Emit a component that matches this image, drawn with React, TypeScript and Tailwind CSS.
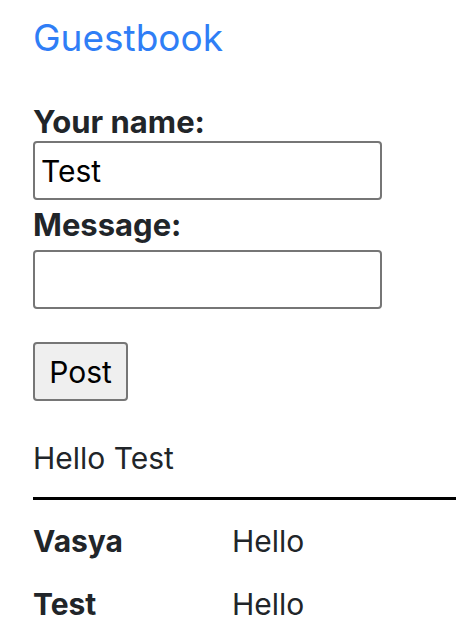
export default function App() {
  return (
    <main className="bg-white min-h-screen font-['Inter','Liberation_Sans',sans-serif] text-[30px] leading-[42px] text-[#212529] pl-[33px] pt-[8px]">

      {/* TITLE */}
      <a href="#" className="block text-[37px] leading-[60px] text-[#2f7ef6]">
        Guestbook
      </a>

      {/* FORM */}
      <form className="mt-[35px]">
        <label className="block font-bold text-[31px] leading-[38px]">Your name:</label>
        <input
          defaultValue="Test"
          className="block w-[349px] h-[59px] border-2 border-[#767676] rounded-[4px] px-[6px] text-black"
        />
        <label className="block font-bold text-[31px] leading-[50px]">Message:</label>
        <input className="block w-[349px] h-[59px] border-2 border-[#767676] rounded-[4px] px-[6px] text-black" />
        <button
          type="button"
          className="mt-[33px] h-[59px] w-[95px] bg-[#efefef] border-2 border-[#767676] rounded-[4px] text-black"
        >
          Post
        </button>
      </form>

      {/* GREETING */}
      <p className="mt-[36px]">Hello Test</p>

      <hr className="mt-[18px] border-t-[3px] border-black" />

      {/* ENTRIES */}
      <div className="mt-[20px] flex flex-col gap-[21px]">
        <div className="flex">
          <span className="w-[199px] font-bold">Vasya</span>
          <span>Hello</span>
        </div>
        <div className="flex">
          <span className="w-[199px] font-bold">Test</span>
          <span>Hello</span>
        </div>
      </div>

    </main>
  )
}
